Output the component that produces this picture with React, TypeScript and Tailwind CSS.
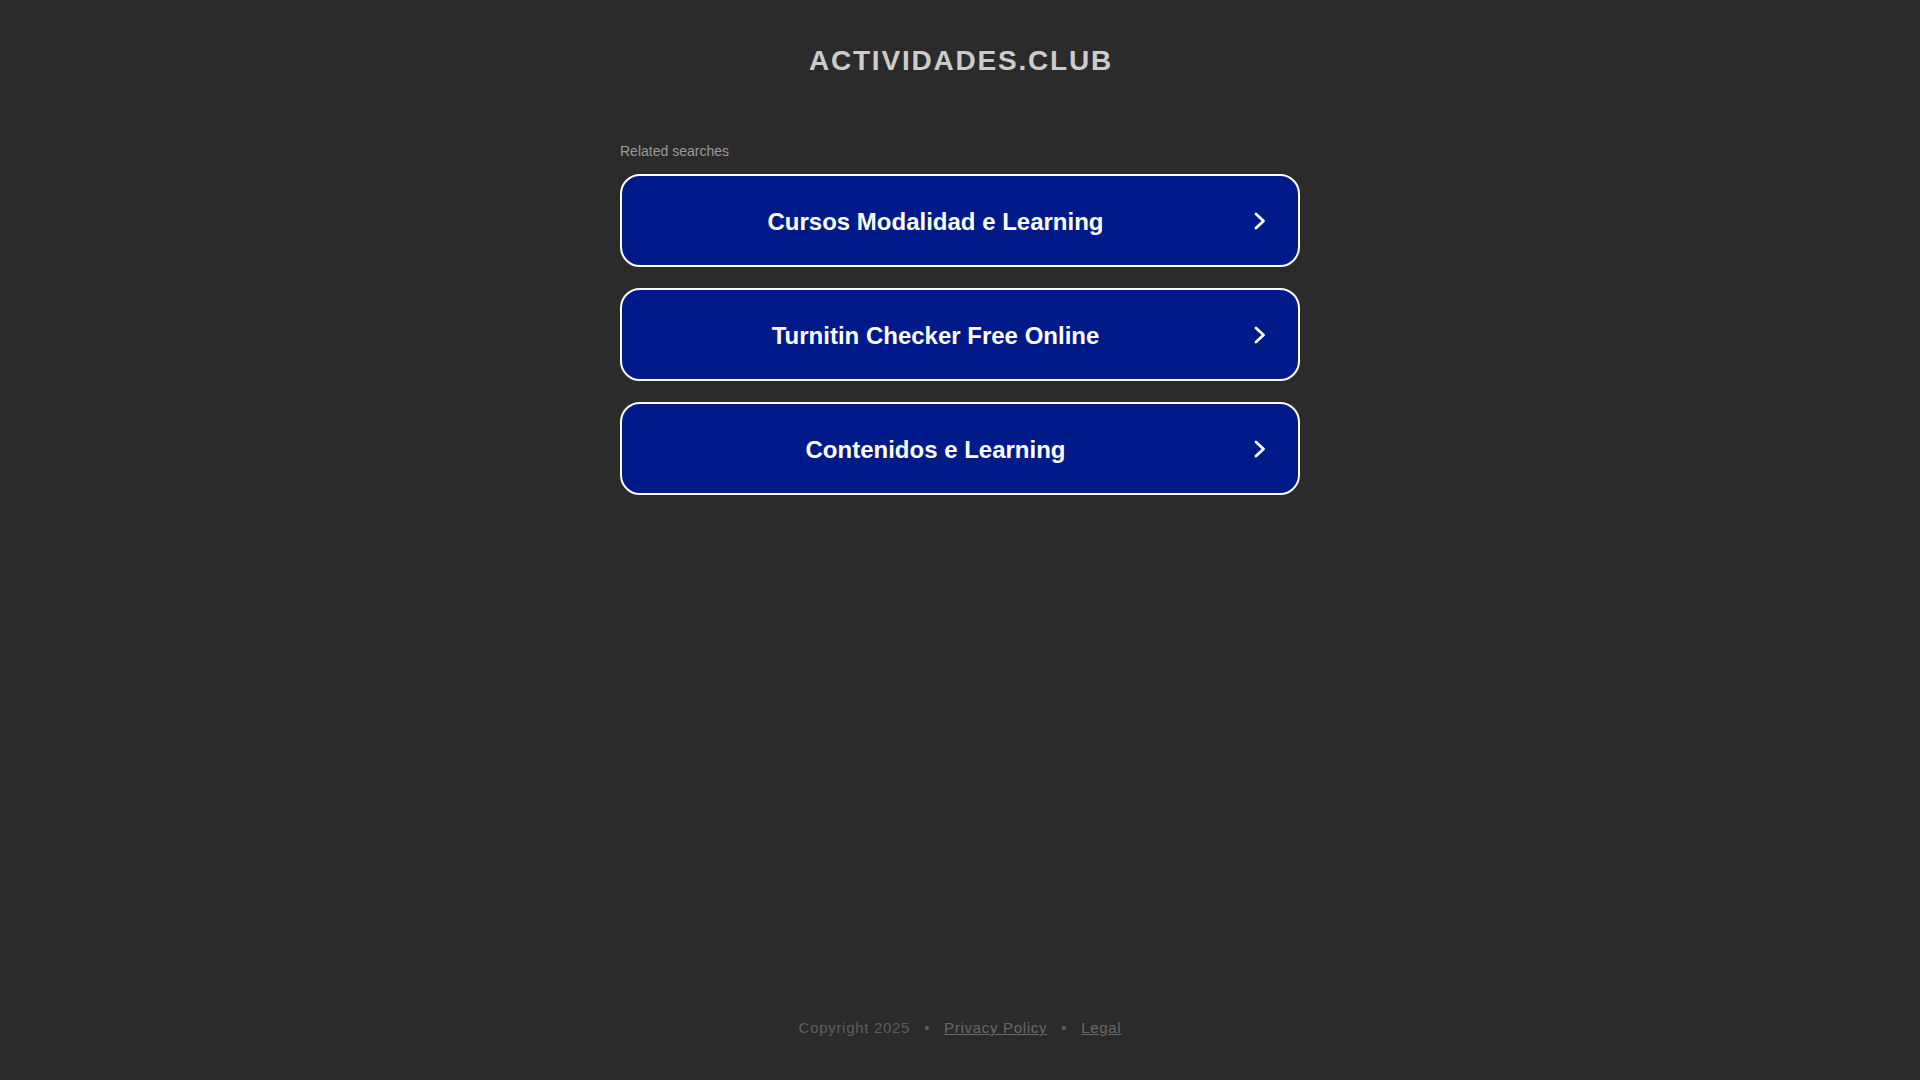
const searches = ['Cursos Modalidad e Learning', 'Turnitin Checker Free Online', 'Contenidos e Learning']

function Chevron() {
    return (
        <svg width="12" height="18" viewBox="0 0 12 18" fill="none" className="ml-[25px] shrink-0">
            <path d="M2 2l7.5 7L2 16" stroke="white" strokeWidth="2.8" strokeLinecap="round" strokeLinejoin="round" />
        </svg>
    )
}

export default function App() {
    return (
        <div className="min-h-screen bg-[#2b2b2b] flex flex-col items-center font-['Liberation_Sans',Arial,sans-serif]">
            <h1 className="pt-[45px] text-[28px] leading-[32px] font-bold tracking-[1.8px] text-[#cccccc] pl-[2px]">
                ACTIVIDADES.CLUB
            </h1>

            <div className="w-[680px] mt-[66px]">
                <p className="text-[14px] leading-[16px] text-[#9a9a9a]">Related searches</p>
                <div className="mt-[15px] flex flex-col gap-[21px]">
                    {searches.map((s) => (
                        <a
                            key={s}
                            href="#"
                            className="h-[93px] flex items-center rounded-[20px] border-2 border-white bg-[#011a8a] pl-[20px] pr-[32px]"
                        >
                            <span className="flex-1 text-center text-[24px] leading-[28px] pt-[2px] font-bold text-white">{s}</span>
                            <Chevron />
                        </a>
                    ))}
                </div>
            </div>

            <footer className="mt-auto pb-[44px] flex items-center text-[15px] leading-[17px] tracking-[0.7px] text-[#5f5f5f]">
                <span>Copyright 2025</span>
                <span className="mx-[14px]">•</span>
                <a href="#" className="underline text-[#686868]">Privacy Policy</a>
                <span className="mx-[14px]">•</span>
                <a href="#" className="underline text-[#686868]">Legal</a>
            </footer>
        </div>
    )
}
